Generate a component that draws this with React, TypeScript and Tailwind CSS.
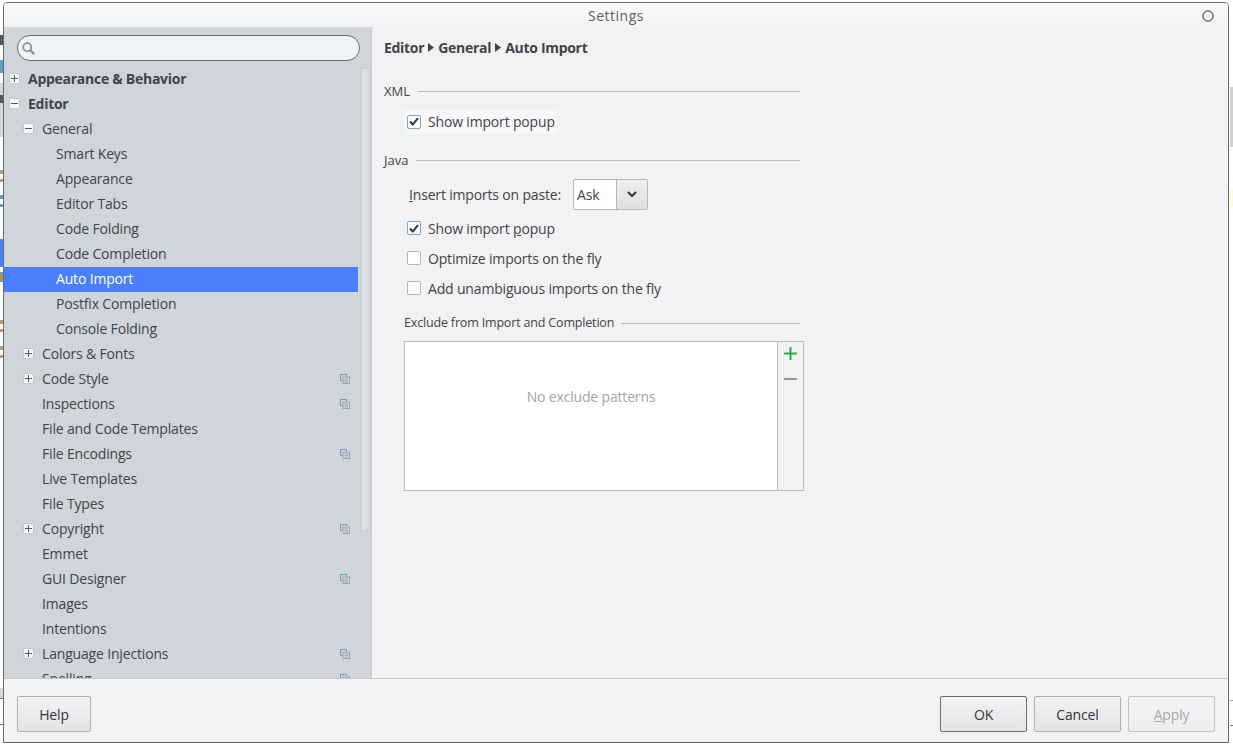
import type { ReactNode } from 'react';

type TreeRow = {
  label: string;
  level: 0 | 1 | 2;
  toggle?: 'plus' | 'minus';
  copy?: boolean;
  selected?: boolean;
};

const rows: TreeRow[] = [
  { label: 'Appearance & Behavior', level: 0, toggle: 'plus' },
  { label: 'Editor', level: 0, toggle: 'minus' },
  { label: 'General', level: 1, toggle: 'minus' },
  { label: 'Smart Keys', level: 2 },
  { label: 'Appearance', level: 2 },
  { label: 'Editor Tabs', level: 2 },
  { label: 'Code Folding', level: 2 },
  { label: 'Code Completion', level: 2 },
  { label: 'Auto Import', level: 2, selected: true },
  { label: 'Postfix Completion', level: 2 },
  { label: 'Console Folding', level: 2 },
  { label: 'Colors & Fonts', level: 1, toggle: 'plus' },
  { label: 'Code Style', level: 1, toggle: 'plus', copy: true },
  { label: 'Inspections', level: 1, copy: true },
  { label: 'File and Code Templates', level: 1 },
  { label: 'File Encodings', level: 1, copy: true },
  { label: 'Live Templates', level: 1 },
  { label: 'File Types', level: 1 },
  { label: 'Copyright', level: 1, toggle: 'plus', copy: true },
  { label: 'Emmet', level: 1 },
  { label: 'GUI Designer', level: 1, copy: true },
  { label: 'Images', level: 1 },
  { label: 'Intentions', level: 1 },
  { label: 'Language Injections', level: 1, toggle: 'plus', copy: true },
  { label: 'Spelling', level: 1, copy: true },
];

function Toggle({ kind }: { kind: 'plus' | 'minus' }) {
  return (
    <span className="flex h-[11px] w-[11px] items-center justify-center rounded-[2px] border border-[#c4c7cb] bg-[#f7f7f8]">
      <svg width="7" height="7" viewBox="0 0 7 7">
        <path d="M0 3.5h7" stroke="#55585c" strokeWidth="1" />
        {kind === 'plus' && <path d="M3.5 0v7" stroke="#55585c" strokeWidth="1" />}
      </svg>
    </span>
  );
}

function CopyIcon() {
  return (
    <svg width="10" height="10" viewBox="0 0 10 10" className="shrink-0">
      <path d="M2.5 6.5h-2v-6h6v2" fill="none" stroke="#5f9fc9" strokeWidth="1" />
      <rect x="3" y="3" width="6.5" height="6.5" fill="#d3d6da" stroke="#a0a2a5" />
      <path d="M4.5 5h3.5M4.5 6.5h3.5M4.5 8h3.5" stroke="#a0a2a5" strokeWidth="0.8" />
    </svg>
  );
}

function SearchIcon() {
  return (
    <svg width="13" height="13" viewBox="0 0 13 13" className="shrink-0">
      <circle cx="5.2" cy="5.2" r="4" fill="none" stroke="#8e9195" strokeWidth="1.8" />
      <path d="M8.2 8.2l4 4" stroke="#8e9195" strokeWidth="2.4" />
    </svg>
  );
}

function Row({ row }: { row: TreeRow }) {
  const indent = row.level === 0 ? 'pl-[24px]' : row.level === 1 ? 'pl-[38px]' : 'pl-[52px]';
  const tone = row.selected ? 'bg-[#4a80fb] text-white' : 'text-[#414448]';
  return (
    <div className={`relative flex h-[25px] w-[354px] shrink-0 items-center pb-[2px] pr-[8px] text-[14px] ${indent} ${tone} ${row.level === 0 ? 'font-bold tracking-[-0.27px]' : ''}`}>
      {row.toggle && (
        <span className={`absolute top-[6px] ${row.level === 0 ? 'left-[5px]' : 'left-[19px]'}`}>
          <Toggle kind={row.toggle} />
        </span>
      )}
      <span className="flex-1 whitespace-nowrap">{row.label}</span>
      {row.copy && <CopyIcon />}
    </div>
  );
}

function Sidebar() {
  return (
    <aside className="flex h-full w-[368px] shrink-0 flex-col overflow-hidden border-r border-[#c6c9cd] bg-[#d0d5dc]">
      <div className="flex h-[40px] shrink-0 items-start pl-[13px] pt-[8px]">
        <div className="flex h-[26px] w-[343px] items-center rounded-full border border-[#66696d] bg-[#f3f3f5] pl-[4px]">
          <SearchIcon />
        </div>
      </div>
      <div className="flex min-h-0 flex-1">
        <div className="flex w-[354px] flex-col overflow-hidden">
          {rows.map((row) => (
            <Row key={row.label} row={row} />
          ))}
        </div>
        <div className="ml-[3px] flex w-[10px] flex-col pt-[1px]">
          <div className="h-[463px] shrink-0 rounded-[1px] border border-[#c9ccd0] bg-gradient-to-r from-[#e4e5e7] to-[#d5d7da]" />
        </div>
      </div>
    </aside>
  );
}

function CheckRow({ label, checked, focused }: { label: ReactNode; checked?: boolean; focused?: boolean }) {
  return (
    <div className={`flex items-center gap-[7px] pl-[3px] ${focused ? 'h-[24px] w-[153px] bg-[#f8f8fa]' : 'h-[30px]'}`}>
      <span className={`flex h-[14px] w-[14px] items-center justify-center rounded-[2px] border bg-white ${checked ? 'border-[#7ba0ee]' : 'border-[#b3b5b8]'}`}>
        {checked && (
          <svg width="10" height="9" viewBox="0 0 10 9">
            <path d="M1 4.5l2.8 3L9 1.2" fill="none" stroke="#33363a" strokeWidth="2" />
          </svg>
        )}
      </span>
      <span className="whitespace-nowrap">{label}</span>
    </div>
  );
}

function GroupTitle({ title, className }: { title: string; className?: string }) {
  return (
    <div className={`flex w-[416px] items-center gap-[8px] text-[13px] tracking-normal ${className ?? ''}`}>
      <span>{title}</span>
      <span className="h-px flex-1 bg-[#b9babd]" />
    </div>
  );
}

function Arrow() {
  return (
    <svg width="6" height="9" viewBox="0 0 6 9" className="mx-[1px]">
      <path d="M0 0l6 4.5L0 9z" fill="#414448" />
    </svg>
  );
}

function MainPanel() {
  return (
    <main className="flex min-w-0 flex-1 flex-col pl-[12px] pt-[8px] text-[14px] text-[#414448]">
      <div className="flex h-[24px] items-center gap-[3px] font-bold tracking-[-0.3px]">
        <span>Editor</span>
        <Arrow />
        <span>General</span>
        <Arrow />
        <span>Auto Import</span>
      </div>
      <GroupTitle title="XML" className="mt-[23px]" />
      <div className="ml-[20px] mt-[8px]">
        <CheckRow label="Show import popup" checked focused />
      </div>
      <GroupTitle title="Java" className="mt-[17px]" />
      <div className="ml-[25px] mt-[9px] flex h-[30px] items-center gap-[12px]">
        <span className="whitespace-nowrap">
          <span className="underline">I</span>nsert imports on paste:
        </span>
        <div className="flex h-[31px] w-[75px] overflow-hidden rounded-[2px] border border-[#b5b7ba]">
          <span className="flex w-[42px] items-center bg-white pl-[3px]">Ask</span>
          <span className="flex flex-1 items-center justify-center border-l border-[#b5b7ba] bg-gradient-to-b from-[#eeeef0] to-[#dfe0e2]">
            <svg width="10" height="7" viewBox="0 0 10 7">
              <path d="M1 1l4 4 4-4" fill="none" stroke="#33363a" strokeWidth="2" />
            </svg>
          </span>
        </div>
      </div>
      <div className="ml-[20px] mt-[4px] flex flex-col">
        <CheckRow
          label={
            <>
              Show import <span className="underline">p</span>opup
            </>
          }
          checked
        />
        <CheckRow label="Optimize imports on the fly" />
        <CheckRow label="Add unambiguous imports on the fly" />
      </div>
      <div className="ml-[20px] mt-[11px] w-[396px]">
        <div className="flex items-center gap-[7px] text-[12.5px]">
          <span className="whitespace-nowrap">Exclude from Import and Completion</span>
          <span className="h-px flex-1 bg-[#b9babd]" />
        </div>
        <div className="mt-[8px] flex h-[150px] w-[400px] border border-[#bababd]">
          <div className="flex flex-1 items-center justify-center bg-white pb-[38px] text-[#a4a6a9]">
            No exclude patterns
          </div>
          <div className="flex w-[26px] flex-col items-center border-l border-[#bababd] pt-[5px]">
            <svg width="13" height="13" viewBox="0 0 13 13">
              <path d="M6.5 0v13M0 6.5h13" stroke="#2fa84f" strokeWidth="2" />
            </svg>
            <svg width="13" height="2" viewBox="0 0 13 2" className="mt-[18px]">
              <path d="M0 1h13" stroke="#949699" strokeWidth="2" />
            </svg>
          </div>
        </div>
      </div>
    </main>
  );
}

function DialogButton({ label, primary, disabled, className }: { label: ReactNode; primary?: boolean; disabled?: boolean; className?: string }) {
  const border = primary ? 'border-[#6b6d70]' : disabled ? 'border-[#c2c3c6]' : 'border-[#adafb2]';
  const tone = disabled ? 'text-[#a9abae] from-[#f3f3f5] to-[#eeeef0]' : 'text-[#33363a] from-[#f3f3f5] to-[#e3e4e6]';
  return (
    <button className={`flex h-[36px] items-center justify-center rounded-[2px] border bg-gradient-to-b text-[14px] ${border} ${tone} ${className ?? 'w-[87px]'}`}>
      {label}
    </button>
  );
}

export default function App() {
  return (
    <div className="relative h-[744px] w-[1233px] overflow-hidden bg-white pl-[3px] pt-[2px] tracking-[-0.17px] [font-family:'Open_Sans','Noto_Sans',sans-serif]">
      {/* bits of the window behind the dialog */}
      <div className="absolute left-0 top-[35px] h-[10px] w-[3px] bg-[#55585c]" />
      <div className="absolute left-0 top-[60px] h-[13px] w-[3px] bg-[#5f9fc9]" />
      <div className="absolute left-0 top-[83px] h-[54px] w-[3px] bg-[#d6d7d9]" />
      <div className="absolute left-0 top-[95px] h-[8px] w-[3px] bg-[#55585c]" />
      <div className="absolute left-0 top-[170px] h-[4px] w-[3px] bg-[#c09a60]" />
      <div className="absolute left-0 top-[179px] h-[3px] w-[3px] bg-[#c09a60]" />
      <div className="absolute left-0 top-[195px] h-[4px] w-[3px] bg-[#5f9fc9]" />
      <div className="absolute left-0 top-[204px] h-[3px] w-[3px] bg-[#5f9fc9]" />
      <div className="absolute left-0 top-[239px] h-[28px] w-[3px] bg-[#4a80fb]" />
      <div className="absolute left-0 top-[272px] h-[10px] w-[3px] bg-[#5f9fc9]" />
      <div className="absolute left-0 top-[275px] h-[4px] w-[3px] bg-[#e08a10]" />
      <div className="absolute left-0 top-[320px] h-[4px] w-[3px] bg-[#c09a60]" />
      <div className="absolute left-0 top-[329px] h-[3px] w-[3px] bg-[#c09a60]" />
      <div className="absolute left-0 top-[346px] h-[4px] w-[3px] bg-[#c09a60]" />
      <div className="absolute left-0 top-[355px] h-[3px] w-[3px] bg-[#c09a60]" />
      <div className="absolute left-0 top-[688px] h-[11px] w-[3px] border-b border-[#77797c] bg-[#d6d7d9]" />
      <div className="absolute left-0 top-[724px] h-px w-[3px] bg-[#77797c]" />
      <div className="absolute left-[1230px] top-[87px] h-[60px] w-[3px] bg-[#cfd0d2]" />
      <div className="absolute left-[1230px] top-[189px] h-[18px] w-[3px] bg-[#fbfbd8]" />
      <div className="absolute left-[1230px] top-[700px] h-px w-[3px] bg-[#9a9c9f]" />
      <div className="absolute left-[1230px] top-[725px] h-px w-[3px] bg-[#77797c]" />

      <div className="relative flex h-[741px] w-[1226px] flex-col overflow-hidden rounded-t-[4px] border border-[#66696d] bg-[#f2f2f5]">
        <header className="relative flex h-[24px] shrink-0 items-center justify-center bg-gradient-to-b from-[#fafafa] to-[#f2f2f4] text-[14px] text-[#5e6165]">
          <span className="tracking-[0.5px]">Settings</span>
          <span className="absolute right-[14px] top-[7px] h-[12px] w-[12px] rounded-full border-2 border-[#8b8d90]" />
        </header>
        <div className="flex min-h-0 flex-1">
          <Sidebar />
          <MainPanel />
        </div>
        <footer className="flex h-[64px] shrink-0 items-start justify-between border-t border-[#c6c8cb] px-[13px] pt-[17px]">
          <DialogButton label="Help" className="w-[74px]" />
          <div className="flex gap-[7px]">
            <DialogButton label="OK" primary />
            <DialogButton label="Cancel" />
            <DialogButton
              disabled
              label={
                <>
                  <span className="underline">A</span>pply
                </>
              }
            />
          </div>
        </footer>
      </div>
    </div>
  );
}
